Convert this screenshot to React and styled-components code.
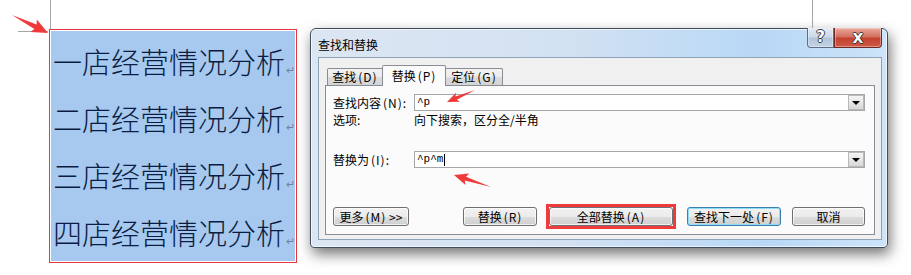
import styled, { createGlobalStyle } from "styled-components";

const GlobalStyle = createGlobalStyle`
  html, body {
    margin: 0;
    padding: 0;
    background: #fff;
  }
  body {
    font-family: "Noto Sans CJK SC", "Noto Sans", sans-serif;
  }
`;

const Page = styled.div`
  position: relative;
  width: 911px;
  height: 275px;
  overflow: hidden;
  display: flex;
  align-items: flex-start;
`;

/* ---------- document selection ---------- */

const Selection = styled.div`
  margin: 29px 0 0 49px;
  width: 248px;
  height: 234px;
  box-sizing: border-box;
  border: 1px solid #e8383d;
  padding: 1px;
  background: #fff;
`;

const Highlight = styled.div`
  height: 100%;
  background: #a7c9ef;
  padding: 2px 0 0 2px;
  box-sizing: border-box;
`;

const DocLine = styled.div`
  font-size: 29px;
  line-height: 57px;
  height: 57px;
  font-weight: 300;
  color: #0b1c42;
  white-space: nowrap;
`;

const ReturnMark = styled.span`
  font-family: "DejaVu Sans", sans-serif;
  font-size: 11px;
  color: #6f82a0;
  margin-left: 1px;
`;

/* ---------- dialog window ---------- */

const Dialog = styled.div`
  margin: 28px 0 0 13px;
  width: 578px;
  height: 220px;
  box-sizing: border-box;
  display: flex;
  flex-direction: column;
  border: 1px solid #3f4d5e;
  border-radius: 6px 6px 4px 4px;
  padding: 0 5px 7px 7px;
  background: linear-gradient(90deg, #dce6f2 0%, #d2e1f2 45%, #b8d8f6 78%, #cde4f9 100%);
  box-shadow: inset 0 0 0 1px rgba(255, 255, 255, 0.65), 2px 6px 14px rgba(0, 0, 0, 0.55);
`;

const TitleBar = styled.div`
  height: 28px;
  flex-shrink: 0;
  display: flex;
  justify-content: space-between;
  align-items: flex-start;
`;

const Title = styled.div`
  font-size: 12px;
  line-height: 16px;
  padding-top: 8px;
  color: #000;
`;

const CaptionButtons = styled.div`
  display: flex;
  margin-top: -1px;
`;

const CaptionButton = styled.div`
  width: ${({ $w }) => $w}px;
  height: 20px;
  box-sizing: border-box;
  display: flex;
  align-items: center;
  justify-content: center;
  font-family: "DejaVu Sans", sans-serif;
  font-weight: bold;
  font-size: ${({ $close }) => ($close ? 14 : 15)}px;
  line-height: 1;
  color: #fff;
  text-shadow: -1px 0 #3a3a3a, 1px 0 #3a3a3a, 0 -1px #3a3a3a, 0 1px #3a3a3a;
  border: 1px solid ${({ $close }) => ($close ? "#6e2a22" : "#5f6f82")};
  border-top: none;
  border-radius: ${({ $close }) => ($close ? "0 0 4px 0" : "0 0 0 4px")};
  background: ${({ $close }) =>
    $close
      ? "linear-gradient(180deg, #e9aa9e 0%, #d4705f 45%, #c3412f 55%, #d15a48 100%)"
      : "linear-gradient(180deg, #e4ecf5 0%, #cbd8e7 45%, #b3c4d8 55%, #c4d4e6 100%)"};
  box-shadow: inset 0 0 0 1px rgba(255, 255, 255, 0.35);
`;

const Client = styled.div`
  flex: 1;
  display: flex;
  flex-direction: column;
  border: 1px solid #8ea2b8;
  background: #f0f0f0;
  padding: 7px 6px 4px 6px;
`;

const Tabs = styled.div`
  display: flex;
  align-items: flex-end;
  height: 21px;
  margin-bottom: -1px;
  padding-left: 2px;
  position: relative;
  z-index: 1;
`;

const Tab = styled.div`
  width: ${({ $w }) => $w}px;
  height: ${({ $active }) => ($active ? 21 : 17)}px;
  margin-bottom: ${({ $active }) => ($active ? 0 : 1)}px;
  box-sizing: border-box;
  border: 1px solid #898c95;
  border-bottom: none;
  border-radius: 2px 2px 0 0;
  background: ${({ $active }) =>
    $active ? "#fbfbfb" : "linear-gradient(180deg, #f2f2f2 0%, #ebebeb 50%, #dcdcdc 51%, #d4d4d4 100%)"};
  margin-left: ${({ $first }) => ($first ? 0 : -1)}px;
  font-size: 12px;
  line-height: 16px;
  padding-top: ${({ $active }) => ($active ? 2 : 0)}px;
  text-align: center;
  color: #000;
  white-space: nowrap;
`;

/* access key like "(N)", spaced as in the SimSun original */
const Key = styled.span`
  margin-left: 2px;
  letter-spacing: 1px;
`;

const TabPanel = styled.div`
  border: 1px solid #898c95;
  background: #fbfbfb;
  padding: 8px 9px 5px 7px;
  height: 150px;
  box-sizing: border-box;
`;

const FieldRow = styled.div`
  display: flex;
  align-items: center;
  height: 17px;
  margin-top: ${({ $mt }) => $mt || 0}px;
`;

const Label = styled.div`
  width: 81px;
  flex-shrink: 0;
  font-size: 12px;
  line-height: 16px;
  color: #000;
  white-space: nowrap;
`;

const Combo = styled.div`
  flex: 1;
  height: 17px;
  box-sizing: border-box;
  border: 1px solid #a5a7ab;
  background: #fff;
  display: flex;
  align-items: center;
  justify-content: space-between;
  padding-left: 2px;
`;

const ComboText = styled.span`
  font-family: "Liberation Mono", monospace;
  font-size: 11px;
  line-height: 13px;
  color: #000;
  display: flex;
  align-items: center;
`;

const Caret = styled.span`
  display: inline-block;
  width: 1px;
  height: 12px;
  background: #000;
  margin-left: 1px;
`;

const DropButton = styled.div`
  width: 16px;
  height: 15px;
  box-sizing: border-box;
  border: 1px solid #b9b9b9;
  background: linear-gradient(180deg, #f5f5f5 0%, #e6e6e6 50%, #d8d8d8 100%);
  display: flex;
  align-items: center;
  justify-content: center;
  &::after {
    content: "";
    border-left: 4px solid transparent;
    border-right: 4px solid transparent;
    border-top: 4px solid #000;
  }
`;

const OptionsRow = styled.div`
  display: flex;
  margin-top: 1px;
  font-size: 12px;
  line-height: 16px;
  color: #000;
`;

const ButtonRow = styled.div`
  display: flex;
  align-items: center;
  height: 25px;
  margin-top: 36px;
`;

const Button = styled.div`
  width: ${({ $w }) => $w}px;
  height: 19px;
  box-sizing: border-box;
  margin-left: ${({ $ml }) => $ml || 0}px;
  border: 1px solid ${({ $default }) => ($default ? "#3c7fb1" : "#707070")};
  border-radius: 3px;
  background: linear-gradient(180deg, #f2f2f2 0%, #ebebeb 50%, #dddddd 51%, #cfcfcf 100%);
  box-shadow: inset 0 0 0 1px ${({ $default }) => ($default ? "#8fdcf6" : "rgba(255,255,255,0.7)")};
  display: flex;
  align-items: center;
  justify-content: center;
  font-size: 12px;
  line-height: 16px;
  color: #000;
  white-space: nowrap;
`;

const RedFrame = styled.div`
  margin-left: ${({ $ml }) => $ml}px;
  border: 3px solid #ee3b3d;
  display: flex;
`;

const Overlay = styled.svg`
  position: absolute;
  left: 0;
  top: 0;
  pointer-events: none;
  z-index: 5;
`;

function Arrow({ from, to, head, wing, shaft }) {
  const [x1, y1] = from;
  const [x2, y2] = to;
  const dx = x2 - x1;
  const dy = y2 - y1;
  const len = Math.hypot(dx, dy);
  const ux = dx / len;
  const uy = dy / len;
  const px = -uy;
  const py = ux;
  const pt = (a, b) => `${x1 + ux * a + px * b},${y1 + uy * a + py * b}`;
  const pts = [
    pt(0, 0),
    pt(len - head, -shaft),
    pt(len - head - 2, -wing),
    pt(len, 0),
    pt(len - head - 2, wing),
    pt(len - head, shaft),
  ].join(" ");
  return <polygon points={pts} fill="#f03a3a" />;
}

const stores = ["一", "二", "三", "四"];

export default function App() {
  return (
    <>
      <GlobalStyle />
      <Page>
        <Selection>
          <Highlight>
            {stores.map((s) => (
              <DocLine key={s}>
                {s}店经营情况分析
                <ReturnMark>↵</ReturnMark>
              </DocLine>
            ))}
          </Highlight>
        </Selection>

        <Dialog>
          <TitleBar>
            <Title>查找和替换</Title>
            <CaptionButtons>
              <CaptionButton $w={27}>?</CaptionButton>
              <CaptionButton $w={48} $close>
                X
              </CaptionButton>
            </CaptionButtons>
          </TitleBar>

          <Client>
            <Tabs>
              <Tab $w={56} $first>
                查找<Key>(D)</Key>
              </Tab>
              <Tab $w={64} $active>
                替换<Key>(P)</Key>
              </Tab>
              <Tab $w={58}>
                定位<Key>(G)</Key>
              </Tab>
            </Tabs>

            <TabPanel>
              <FieldRow>
                <Label>
                  查找内容<Key>(N)</Key>:
                </Label>
                <Combo>
                  <ComboText>^p</ComboText>
                  <DropButton />
                </Combo>
              </FieldRow>
              <OptionsRow>
                <Label>选项:</Label>
                <span>向下搜索，区分全/半角</span>
              </OptionsRow>
              <FieldRow $mt={23}>
                <Label>
                  替换为<Key>(I)</Key>:
                </Label>
                <Combo>
                  <ComboText>
                    ^p^m
                    <Caret />
                  </ComboText>
                  <DropButton />
                </Combo>
              </FieldRow>

              <ButtonRow>
                <Button $w={76}>
                  更多<Key>(M)</Key>&nbsp;&gt;&gt;
                </Button>
                <Button $w={74} $ml={54}>
                  替换<Key>(R)</Key>
                </Button>
                <RedFrame $ml={9}>
                  <Button $w={124}>
                    全部替换<Key>(A)</Key>
                  </Button>
                </RedFrame>
                <Button $w={94} $ml={11} $default>
                  查找下一处<Key>(F)</Key>
                </Button>
                <Button $w={73} $ml={11}>
                  取消
                </Button>
              </ButtonRow>
            </TabPanel>
          </Client>
        </Dialog>

        <Overlay width="911" height="275" viewBox="0 0 911 275">
          <line x1="50.5" y1="0" x2="50.5" y2="29" stroke="#a6a6a6" />
          <line x1="18" y1="31.5" x2="48" y2="31.5" stroke="#a6a6a6" />
          <line x1="812.5" y1="0" x2="812.5" y2="28" stroke="#a6a6a6" />
          <Arrow from={[12, 15]} to={[48, 33]} head={14} wing={7} shaft={2.5} />
          <Arrow from={[475, 90]} to={[447, 102]} head={10} wing={5} shaft={1.8} />
          <Arrow from={[491, 187]} to={[454, 175]} head={12} wing={6} shaft={2} />
        </Overlay>
      </Page>
    </>
  );
}
